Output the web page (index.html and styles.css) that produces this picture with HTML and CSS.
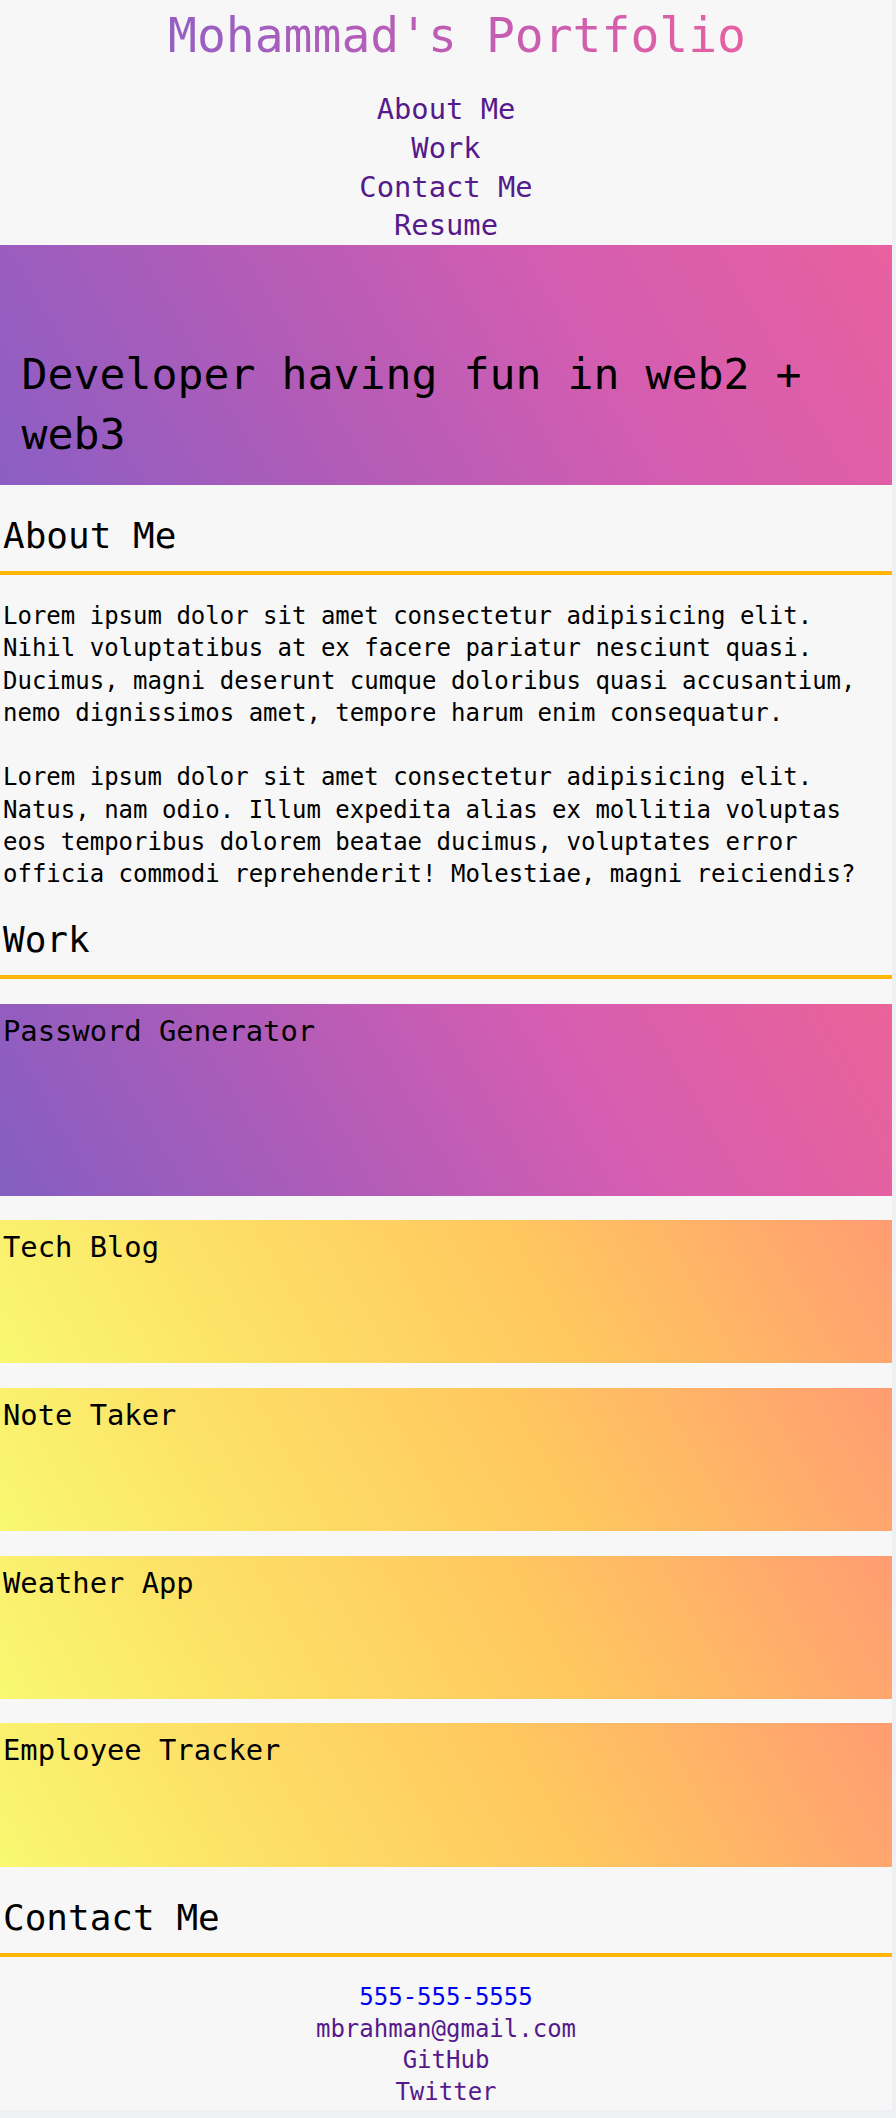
FILE: index.html
```html
<!DOCTYPE html>
<html lang="en">
<head>
<meta charset="utf-8">
<title>Mohammad's Portfolio</title>
<link rel="stylesheet" href="styles.css">
</head>
<body>
<header class="site-header">
  <h1 class="site-title"><span class="title-text">Mohammad's Portfolio</span></h1>
  <nav class="site-nav">
    <a href="#about">About Me</a>
    <a href="#work">Work</a>
    <a href="#contact">Contact Me</a>
    <a href="#resume">Resume</a>
  </nav>
</header>

<section class="hero">
  <h2 class="hero-text">Developer having fun in web2 + web3</h2>
</section>

<section class="section" id="about">
  <h2 class="section-title">About Me</h2>
  <p class="para">Lorem ipsum dolor sit amet consectetur adipisicing elit. Nihil voluptatibus at ex facere pariatur nesciunt quasi. Ducimus, magni deserunt cumque doloribus quasi accusantium, nemo dignissimos amet, tempore harum enim consequatur.</p>
  <p class="para">Lorem ipsum dolor sit amet consectetur adipisicing elit. Natus, nam odio. Illum expedita alias ex mollitia voluptas eos temporibus dolorem beatae ducimus, voluptates error officia commodi reprehenderit! Molestiae, magni reiciendis?</p>
</section>

<section class="section" id="work">
  <h2 class="section-title">Work</h2>
  <div class="cards">
    <div class="card card-featured">Password Generator</div>
    <div class="card card-warm">Tech Blog</div>
    <div class="card card-warm">Note Taker</div>
    <div class="card card-warm">Weather App</div>
    <div class="card card-warm">Employee Tracker</div>
  </div>
</section>

<section class="section" id="contact">
  <h2 class="section-title">Contact Me</h2>
  <div class="contact-list">
    <a class="phone" href="tel:555-555-5555">555-555-5555</a>
    <a href="#mail">mbrahman@gmail.com</a>
    <a href="#github">GitHub</a>
    <a href="#twitter">Twitter</a>
  </div>
</section>
</body>
</html>
```
FILE: styles.css
```css
html {
  background: #eef0f3;
}

body {
  margin: 0;
  width: 892px;
  background: #f7f7f7;
  color: #000;
  font-family: "DejaVu Sans Mono", "Liberation Mono", monospace;
  font-size: 24px;
  padding-bottom: 2px;
}

.site-header {
  text-align: center;
}

.site-title {
  margin: 0;
  padding: 3px 0 0 22px;
  font-size: 48px;
  font-weight: normal;
  line-height: 64px;
}

.title-text {
  display: inline-block;
  background: linear-gradient(to right, #955fc3, #c05db5 50%, #e660a3);
  -webkit-background-clip: text;
  background-clip: text;
  color: transparent;
}

.site-nav {
  margin-top: 23px;
  display: flex;
  flex-direction: column;
  align-items: center;
}

.site-nav a {
  color: #551a8b;
  text-decoration: none;
  font-size: 28.8px;
  line-height: 38.75px;
}

.hero {
  height: 240px;
  display: flex;
  align-items: flex-end;
  background: linear-gradient(60deg, #8b5ec4, #b25cb7 35%, #d35db1 65%, #e8609f);
}

.hero-text {
  margin: 0;
  padding: 0 21.6px 21px;
  font-size: 43.2px;
  font-weight: normal;
  line-height: 60px;
}

.section-title {
  margin: 26px 0 0;
  padding: 0 3px 11px;
  font-size: 36px;
  font-weight: normal;
  line-height: 49px;
  border-bottom: 4px solid #ffb703;
}

.para {
  margin: 25px 0 0;
  padding: 0 3px;
  line-height: 32.3px;
}

.para + .para {
  margin-top: 32.3px;
}

#work .section-title {
  margin-top: 24px;
}

.cards {
  margin-top: 25px;
  display: flex;
  flex-direction: column;
  gap: 24.3px;
}

.card {
  height: 143.5px;
  box-sizing: border-box;
  padding: 8px 3px 0;
  font-size: 28.8px;
  line-height: 39px;
}

.card-featured {
  height: 192px;
  background: linear-gradient(60deg, #845ec2, #b05cb8 35%, #d65db1 65%, #ea6399);
}

.card-warm {
  background: linear-gradient(60deg, #f9f871, #fdde66 30%, #ffc75f 60%, #ff9c72);
}

.contact-list {
  margin-top: 25.6px;
  display: flex;
  flex-direction: column;
  align-items: center;
}

.contact-list a {
  color: #551a8b;
  text-decoration: none;
  line-height: 31.5px;
}

.contact-list a.phone {
  color: #0000ee;
}
```
